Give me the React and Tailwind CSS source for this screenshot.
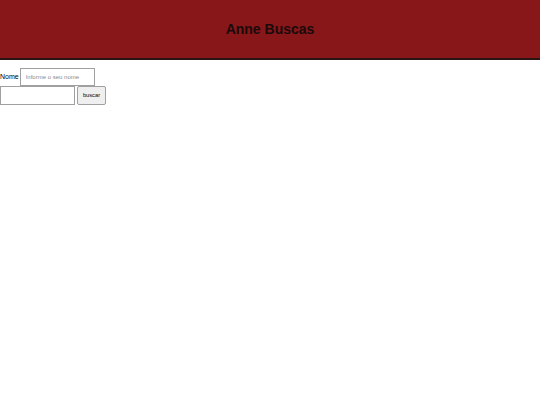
import React, { useState } from 'react';

const App = () => {
    const [nome, setNome] = useState('');
    const [busca, setBusca] = useState('');

    return (
        <div className="min-h-[405px] bg-white font-['Liberation_Sans',Arial,sans-serif] text-black">
            <header className="h-[60px] bg-[#88171a] border-b-2 border-[#2a1414] flex items-center justify-center">
                <h1 className="text-[14px] font-bold text-[#1a0a0a]">Anne Buscas</h1>
            </header>
            <form className="pt-2" onSubmit={(e) => e.preventDefault()}>
                <div className="flex items-center">
                    <label className="text-[7px] pr-[1px]">Nome</label>
                    <input
                        type="text"
                        value={nome}
                        onChange={(e) => setNome(e.target.value)}
                        placeholder="Informe o seu nome"
                        className="w-[75px] h-[18px] border border-[#a0a0a0] px-[5px] text-[6px] placeholder:text-[#8a8a8a] outline-none"
                    />
                </div>
                <div className="flex items-center">
                    <input
                        type="text"
                        value={busca}
                        onChange={(e) => setBusca(e.target.value)}
                        className="w-[75px] h-[19px] border border-[#a0a0a0] outline-none"
                    />
                    <button
                        type="submit"
                        className="ml-[2px] w-[29px] h-[19px] bg-[#efefef] border border-[#a0a0a0] rounded-[2px] text-[5.7px]"
                    >
                        buscar
                    </button>
                </div>
            </form>
        </div>
    );
};

export default App;
